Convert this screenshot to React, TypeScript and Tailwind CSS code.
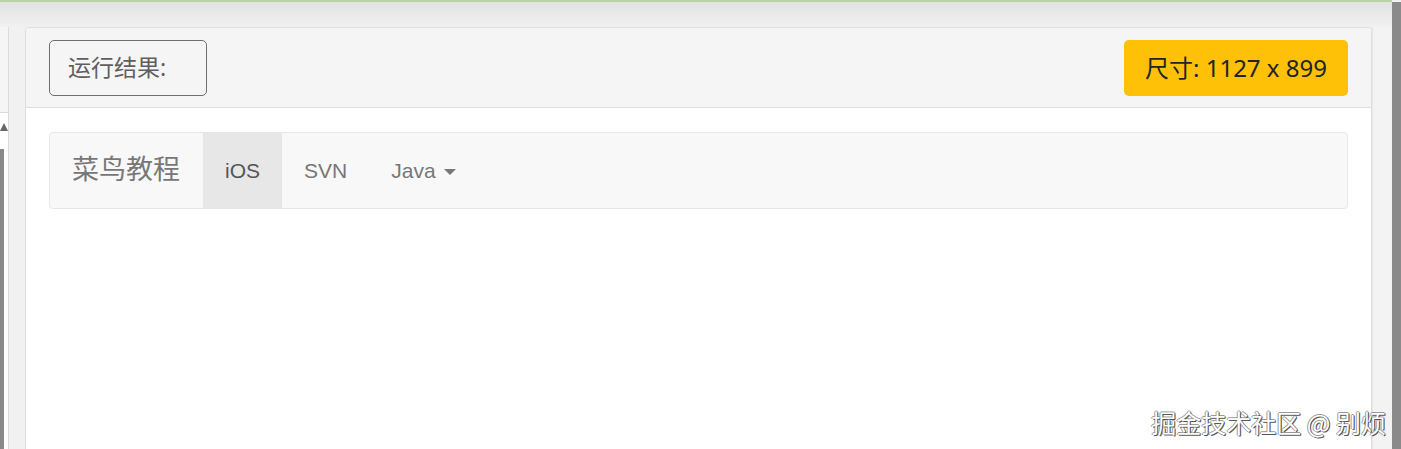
import React from 'react';

const cjk = { fontFamily: '"Noto Sans", "Noto Sans CJK SC", sans-serif' };
const navFont = { fontFamily: '"Liberation Sans", "Noto Sans CJK SC", sans-serif' };

const navLinks = [
  { label: 'iOS', active: true },
  { label: 'SVN', active: false },
  { label: 'Java', active: false, dropdown: true },
];

const App: React.FC = () => {
  return (
    <div className="relative w-[1401px] h-[449px] overflow-hidden bg-[#f1f1f1] flex">
      <div className="w-[1392px] shrink-0 flex flex-col">
        <div className="h-[2px] bg-[#b9d3a3]" />
        <div className="h-[25px] bg-gradient-to-b from-[#e2e2e2] to-[#f1f1f1]" />

        <div className="flex h-[422px]">
          {/* left sliver of the code panel */}
          <div className="w-[9px] shrink-0 flex flex-col border-r border-[#dcdcdc] bg-white">
            <div className="h-[86px] bg-[#f5f5f5] border-b border-[#dcdcdc]" />
            <div className="relative flex-1">
              <div className="absolute left-0 top-[10px] w-0 h-0 border-l-[4px] border-r-[4px] border-b-[8px] border-l-transparent border-r-transparent border-b-[#666]" />
              <div className="absolute left-0 top-[36px] bottom-0 w-[4px] bg-[#8a8a8a]" />
            </div>
          </div>

          <div className="w-[16px] shrink-0" />

          {/* result panel */}
          <div className="w-[1347px] shrink-0 flex flex-col rounded-t-[4px] border border-b-0 border-[#dedede] bg-white">
            <div className="h-[80px] flex items-center justify-between px-[23px] bg-[#f5f5f5] border-b border-[#dcdcdc] rounded-t-[4px]">
              <div
                className="h-[56px] w-[158px] flex items-center pl-[18px] rounded-[5px] border border-[#6f6f6f] text-[23px] text-[#5f5f5f]"
                style={cjk}
              >
                运行结果:
              </div>
              <div
                className="h-[56px] w-[224px] flex items-center justify-center rounded-[5px] bg-[#ffc107] text-[24px] text-[#212529]"
                style={cjk}
              >
                尺寸: 1127 x 899
              </div>
            </div>

            <div className="pt-[24px] px-[23px]">
              <div className="h-[77px] flex items-stretch rounded-[4px] border border-[#e7e7e7] bg-[#f8f8f8]" style={navFont}>
                <div className="flex items-center pl-[22px] pr-[23px] text-[27px] text-[#777]">菜鸟教程</div>
                {navLinks.map((link) => (
                  <div
                    key={link.label}
                    className={
                      link.active
                        ? 'flex items-center px-[22px] text-[21px] text-[#555] bg-[#e7e7e7]'
                        : 'flex items-center px-[22px] text-[21px] text-[#777]'
                    }
                  >
                    {link.label}
                    {link.dropdown && (
                      <span className="ml-[8px] mt-[2px] w-0 h-0 border-l-[6px] border-r-[6px] border-t-[6px] border-l-transparent border-r-transparent border-t-[#777]" />
                    )}
                  </div>
                ))}
              </div>
            </div>
          </div>

          <div className="w-[20px] shrink-0 border-l border-[#e6e6e6] bg-[#f3f3f3]" />
        </div>
      </div>
      <div className="w-[9px] shrink-0 mt-[2px] bg-[#8a8a8a]" />

      <div
        className="absolute right-[15px] bottom-[14px] text-[25px] leading-none text-white"
        style={{
          fontFamily: '"Noto Sans CJK SC", sans-serif',
          textShadow: '1px 1px 0 #555, -1px 0 0 #999, 0 -1px 0 #999, 1px 0 0 #777',
        }}
      >
        掘金技术社区 @ 别烦
      </div>
    </div>
  );
};

export default App;
